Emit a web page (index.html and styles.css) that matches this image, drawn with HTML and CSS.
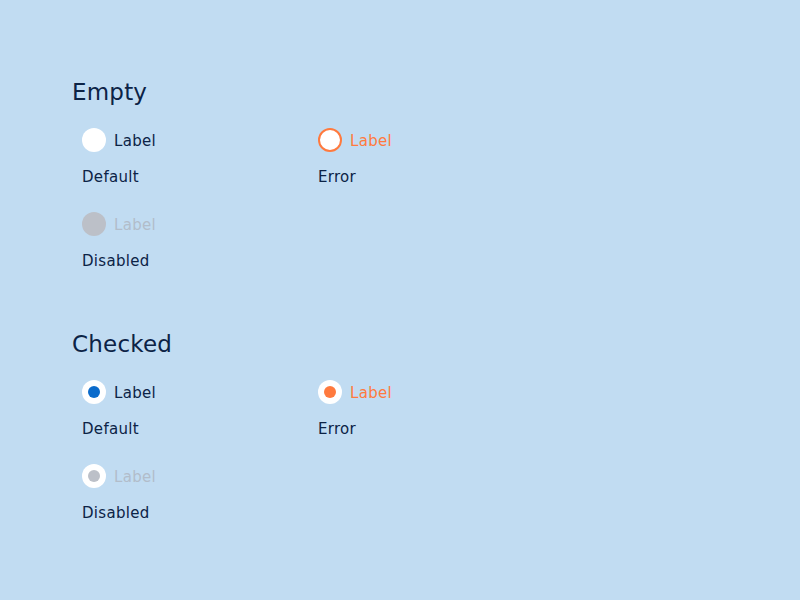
FILE: index.html
```html
<!DOCTYPE html>
<html>
<head>
<meta charset="utf-8">
<link rel="stylesheet" href="styles.css">
</head>
<body>
<main class="page">
  <section class="group">
    <h2 class="title">Empty</h2>
    <div class="grid">
      <div class="item">
        <label class="radio"><span class="dot"></span><span class="label">Label</span></label>
        <div class="caption">Default</div>
      </div>
      <div class="item">
        <label class="radio error"><span class="dot"></span><span class="label">Label</span></label>
        <div class="caption">Error</div>
      </div>
      <div class="item">
        <label class="radio disabled"><span class="dot"></span><span class="label">Label</span></label>
        <div class="caption">Disabled</div>
      </div>
    </div>
  </section>
  <section class="group">
    <h2 class="title">Checked</h2>
    <div class="grid">
      <div class="item">
        <label class="radio checked"><span class="dot"></span><span class="label">Label</span></label>
        <div class="caption">Default</div>
      </div>
      <div class="item">
        <label class="radio checked error"><span class="dot"></span><span class="label">Label</span></label>
        <div class="caption">Error</div>
      </div>
      <div class="item">
        <label class="radio checked disabled"><span class="dot"></span><span class="label">Label</span></label>
        <div class="caption">Disabled</div>
      </div>
    </div>
  </section>
</main>
</body>
</html>
```
FILE: styles.css
```css
html, body {
  margin: 0;
  padding: 0;
}
body {
  background: #c1dcf2;
  font-family: "DejaVu Sans", "Open Sans", sans-serif;
  color: #0c2346;
  width: 800px;
  height: 600px;
}
.page {
  padding: 78px 0 0 72px;
  display: flex;
  flex-direction: column;
  gap: 60px;
}
.title {
  margin: 0;
  font-size: 23px;
  line-height: 28px;
  font-weight: 400;
  letter-spacing: 0.2px;
}
.grid {
  margin-top: 22px;
  padding-left: 10px;
  display: grid;
  grid-template-columns: 236px 200px;
  row-gap: 26px;
}
.item {
  display: flex;
  flex-direction: column;
  gap: 14px;
}
.radio {
  display: flex;
  align-items: center;
  gap: 8px;
  height: 24px;
}
.dot {
  width: 24px;
  height: 24px;
  border-radius: 50%;
  background: #ffffff;
  box-sizing: border-box;
  display: flex;
  align-items: center;
  justify-content: center;
}
.label,
.caption {
  font-size: 15px;
  line-height: 18px;
  padding-top: 2px;
  letter-spacing: 0.3px;
}
.error .dot {
  border: 2px solid #ff7a3e;
}
.error .label {
  color: #ff7a3e;
}
.disabled .dot {
  background: #bcc0c8;
}
.disabled .label {
  color: #b2bdca;
}
.checked .dot {
  background: #ffffff;
  border: none;
}
.checked .dot::after {
  content: "";
  width: 12px;
  height: 12px;
  border-radius: 50%;
  background: #0b6bcb;
}
.checked.error .dot::after {
  background: #ff7a3e;
}
.checked.disabled .dot::after {
  background: #bcc0c8;
}
```
